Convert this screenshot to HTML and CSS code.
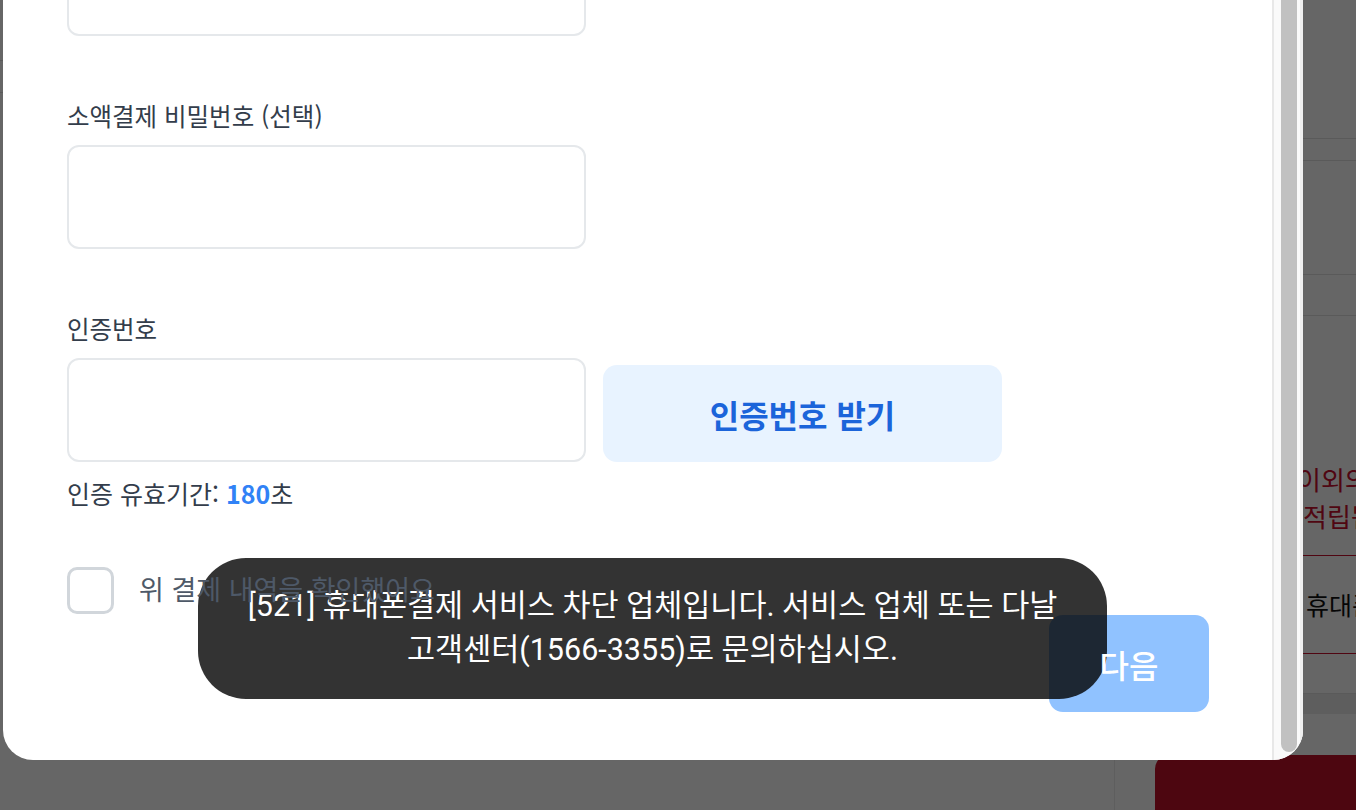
FILE: index.html
```html
<!DOCTYPE html>
<html lang="ko">
<head>
<meta charset="utf-8">
<title>휴대폰 결제</title>
<link rel="stylesheet" href="styles.css">
</head>
<body>
<div class="page">
  <main class="main">
    <div class="main-head"></div>
    <div class="main-sub"></div>
  </main>
  <aside class="aside">
    <div class="a-row a-h138"></div>
    <div class="a-row a-h21"></div>
    <div class="a-row a-h113"></div>
    <div class="a-row a-h40"></div>
    <div class="a-notice">
      <div class="n-line1">이외의 결제수단은</div>
      <div class="n-line2">적립됩니다</div>
    </div>
    <div class="a-method">휴대폰 결제</div>
    <div class="a-row a-h39"></div>
    <div class="a-band"></div>
    <div class="a-pay"></div>
  </aside>
</div>
<div class="dim"></div>

<div class="modal">
  <div class="modal-body">
    <form class="form">
      <div class="field">
        <input class="input" type="text" aria-label="휴대폰 번호">
      </div>
      <div class="field">
        <label class="label">소액결제 비밀번호 (선택)</label>
        <input class="input" type="password">
      </div>
      <div class="field">
        <label class="label">인증번호</label>
        <div class="input-row">
          <input class="input" type="text">
          <button type="button" class="btn-code">인증번호 받기</button>
        </div>
        <p class="helper">인증 유효기간: <b>180</b>초</p>
      </div>
      <div class="agree">
        <span class="checkbox"></span>
        <span class="agree-text">위 결제 내역을 확인했어요</span>
      </div>
      <div class="actions">
        <button type="button" class="btn-next"><span>다음</span></button>
      </div>
    </form>
  </div>
  <div class="scrollbar"><div class="thumb"></div></div>
  <div class="toast">[521] 휴대폰결제 서비스 차단 업체입니다. 서비스 업체 또는 다날<br>고객센터(1566-3355)로 문의하십시오.</div>
</div>
</body>
</html>
```

FILE: styles.css
```css
html, body {
  margin: 0;
  height: 100%;
}
body {
  font-family: "Noto Sans CJK KR", "Noto Sans", sans-serif;
  background: #fff;
  overflow: hidden;
}

/* background page */
.page {
  display: flex;
  height: 810px;
}
.main {
  width: 1114px;
  flex-shrink: 0;
  border-right: 1px solid #eaeaea;
}
.main-head {
  height: 60px;
  border-bottom: 1px solid #e2e2e2;
}
.main-sub {
  height: 31px;
  border-bottom: 1px solid #e2e2e2;
}
.aside {
  flex: 1;
  display: flex;
  flex-direction: column;
  overflow: hidden;
}
.aside > * {
  flex-shrink: 0;
}
.a-row {
  border-bottom: 1px solid #e2e2e2;
}
.a-h138 { height: 138px; }
.a-h21 { height: 21px; }
.a-h113 { height: 113px; }
.a-h40 { height: 40px; }
.a-h39 { height: 39px; }
.a-notice {
  height: 240px;
  box-sizing: border-box;
  padding-top: 144px;
  border-bottom: 1px solid #c8102e;
  color: #c8102e;
  font-size: 26px;
  line-height: 37px;
  white-space: nowrap;
  overflow: hidden;
}
.n-line1 { padding-left: 182px; }
.n-line2 { padding-left: 188px; }
.a-method {
  height: 97px;
  line-height: 97px;
  border-bottom: 1px solid #c8102e;
  padding-left: 191px;
  font-size: 25px;
  color: #111;
  white-space: nowrap;
  overflow: hidden;
}
.a-band {
  height: 20px;
  background: #ececec;
}
.a-pay {
  margin-top: 41px;
  margin-left: 40px;
  height: 80px;
  background: #c10f28;
  border-radius: 14px 0 0 0;
}

.dim {
  position: fixed;
  inset: 0;
  background: rgba(0, 0, 0, 0.6);
}

/* modal */
.modal {
  position: fixed;
  left: 3px;
  top: 0;
  width: 1300px;
  height: 760px;
  background: #fff;
  border-radius: 0 0 30px 30px;
  display: flex;
  overflow: hidden;
}
.modal-body {
  flex: 1;
  min-width: 0;
  display: flex;
  flex-direction: column;
  justify-content: flex-end;
  padding: 0 63px 48px 64px;
  overflow: hidden;
}
.form {
  flex-shrink: 0;
  margin: 0;
}
.field + .field {
  margin-top: 65px;
}
.label {
  display: block;
  font-size: 24.5px;
  line-height: 30px;
  color: #333d4b;
  margin-bottom: 14px;
}
.input {
  display: block;
  box-sizing: border-box;
  width: 519px;
  height: 104px;
  margin: 0;
  border: 2px solid #e5e8eb;
  border-radius: 12px;
  background: #fff;
  outline: none;
  font: inherit;
}
.input-row {
  display: flex;
  align-items: flex-end;
  gap: 17px;
}
.btn-code {
  width: 399px;
  height: 97px;
  border: 0;
  border-radius: 14px;
  background: #e8f3ff;
  color: #1b64da;
  font-family: "Noto Sans CJK KR", sans-serif;
  font-weight: 700;
  font-size: 32px;
  padding: 0;
}
.helper {
  margin: 16px 0 0;
  font-size: 25px;
  line-height: 30px;
  color: #333d4b;
}
.helper b {
  color: #3182f6;
  font-weight: 700;
}
.agree {
  display: flex;
  align-items: center;
  gap: 25px;
  height: 47px;
  margin-top: 59px;
}
.checkbox {
  width: 47px;
  height: 47px;
  box-sizing: border-box;
  border: 3px solid #d1d6db;
  border-radius: 10px;
  flex-shrink: 0;
}
.agree-text {
  position: relative;
  z-index: 3;
  font-size: 27px;
  line-height: 30px;
  color: #4e5968;
  margin-top: -4px;
}
.actions {
  display: flex;
  justify-content: flex-end;
  margin-top: 1px;
}
.btn-next {
  width: 160px;
  height: 97px;
  border: 0;
  border-radius: 14px;
  background: #90c2ff;
  color: #fff;
  font-family: "Noto Sans CJK KR", sans-serif;
  font-weight: 500;
  font-size: 32px;
  padding: 0;
}
.btn-next span {
  position: relative;
  z-index: 3;
}

.scrollbar {
  width: 31px;
  flex-shrink: 0;
  box-sizing: border-box;
  border-left: 2px solid #e8e8e8;
  border-right: 3px solid #efefef;
  background: #fafafa;
  padding: 0 3px 0 7px;
}
.thumb {
  height: 752px;
  background: #c1c1c1;
  border-radius: 0 0 8px 8px;
}

.toast {
  position: absolute;
  left: 195px;
  top: 558px;
  z-index: 2;
  width: 909px;
  height: 141px;
  box-sizing: border-box;
  padding: 26px 10px;
  background: rgba(0, 0, 0, 0.8);
  border-radius: 48px;
  color: #fff;
  font-family: Roboto, "Noto Sans CJK KR", sans-serif;
  font-weight: 400;
  font-size: 30.5px;
  line-height: 44px;
  text-align: center;
  white-space: nowrap;
}
```
